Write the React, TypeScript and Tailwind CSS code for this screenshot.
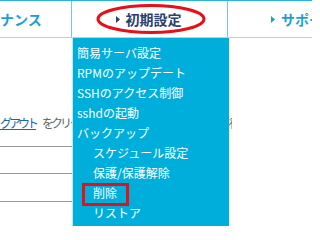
import React from 'react'

const menu = [
  { label: '簡易サーバ設定', indent: false },
  { label: 'RPMのアップデート', indent: false },
  { label: 'SSHのアクセス制御', indent: false },
  { label: 'sshdの起動', indent: false },
  { label: 'バックアップ', indent: false },
  { label: 'スケジュール設定', indent: true },
  { label: '保護/保護解除', indent: true },
  { label: '削除', indent: true, marked: true },
  { label: 'リストア', indent: true },
]

function Arrow({ color }: { color: string }) {
  return (
    <svg width="4" height="7" viewBox="0 0 4 7" className="mr-[6px] shrink-0">
      <path d="M0 0 L4 3.5 L0 7 Z" fill={color} />
    </svg>
  )
}

export default function App() {
  return (
    <div
      className="relative w-[312px] h-[226px] overflow-hidden bg-white"
      style={{ fontFamily: '"Noto Sans CJK JP", "Liberation Sans", sans-serif' }}
    >
      {/* global nav */}
      <nav className="flex h-[38px] border-t border-t-[#2cb3d8] border-b border-b-[#9fdcec]">
        <div className="w-[72px] shrink-0 flex items-center border-r border-r-[#7cc6d8] text-[14px] font-bold text-[#1d9fd0]">
          <span>ナンス</span>
        </div>
        <div className="w-[156px] shrink-0 flex items-center justify-center pr-[2px] border-r border-r-[#7cc6d8] text-[14px] font-bold text-[#2d3f6c]">
          <Arrow color="#2d3f6c" />
          初期設定
        </div>
        <div className="flex-1 min-w-0 flex items-center pl-[43px] text-[14px] font-bold text-[#1d9fd0] whitespace-nowrap overflow-hidden">
          <Arrow color="#1d9fd0" />
          サポート
        </div>
      </nav>

      {/* page body behind the menu */}
      <div className="pt-[76px] text-[12px] text-[#666] whitespace-nowrap">
        <p className="flex w-[232px] overflow-hidden tracking-[-3px]">
          <span className="text-[#1a6aa0] underline">グアウト</span>
          <span className="ml-[6px]">をクリックするとログアウトしてトップページ画面に戻</span>
        </p>
        <div className="mt-[14px] w-[73px]">
          <div className="h-[27px] border-t border-t-[#999]" />
          <div className="h-[28px] border-t border-t-[#999]" />
          <div className="h-[28px] border-t border-t-[#999]" />
        </div>
      </div>

      {/* dropdown */}
      <ul className="absolute left-[72px] top-[38px] w-[157px] h-[200px] bg-[#00aedb] border-l border-l-[#bfeaf5] pt-[5px] text-[12px] text-white">
        {menu.map((m) => (
          <li
            key={m.label}
            className={`h-[20px] leading-[20px] whitespace-nowrap ${m.indent ? 'pl-[20px]' : 'pl-[4px]'}`}
          >
            <span className={m.marked ? 'relative' : ''}>
              {m.label}
              {m.marked && (
                <span className="absolute -left-[11px] -top-[1px] w-[47px] h-[23px] border-[3px] border-[#e5101a]" />
              )}
            </span>
          </li>
        ))}
      </ul>

      {/* red ellipse around 初期設定 */}
      <svg className="absolute left-0 top-0" width="312" height="40">
        <ellipse cx="151" cy="19" rx="53" ry="13.5" fill="none" stroke="#e5101a" strokeWidth="3" />
      </svg>
    </div>
  )
}
